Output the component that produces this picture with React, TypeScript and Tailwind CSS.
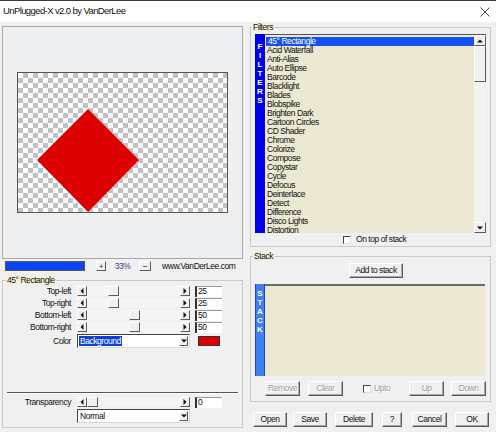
import React from 'react';

const filters = [
  '45° Rectangle',
  'Acid Waterfall',
  'Anti-Alias',
  'Auto Ellipse',
  'Barcode',
  'Blacklight',
  'Blades',
  'Blobspike',
  'Brighten Dark',
  'Cartoon Circles',
  'CD Shader',
  'Chrome',
  'Colorize',
  'Compose',
  'Copystar',
  'Cycle',
  'Defocus',
  'Deinterlace',
  'Detect',
  'Difference',
  'Disco Lights',
  'Distortion',
];

const raised =
  'border border-t-white border-l-white border-r-[#5a5a5a] border-b-[#5a5a5a] bg-[#f0f0f0]';

const Arrow = ({ dir }: { dir: 'left' | 'right' | 'up' | 'down' }) => {
  if (dir === 'left')
    return (
      <svg width="4" height="6" viewBox="0 0 4 6">
        <polygon points="3.5,0 3.5,6 0.5,3" fill="#111" />
      </svg>
    );
  if (dir === 'right')
    return (
      <svg width="4" height="6" viewBox="0 0 4 6">
        <polygon points="0.5,0 0.5,6 3.5,3" fill="#111" />
      </svg>
    );
  if (dir === 'up')
    return (
      <svg width="6" height="4" viewBox="0 0 6 4">
        <polygon points="0,3.5 6,3.5 3,0.5" fill="#111" />
      </svg>
    );
  return (
    <svg width="6" height="4" viewBox="0 0 6 4">
      <polygon points="0,0.5 6,0.5 3,3.5" fill="#111" />
    </svg>
  );
};

const HScroll = ({ value }: { value: number }) => (
  <div className="flex h-[10px] w-[113px] bg-[#f5f5f5]">
    <div className={`${raised} flex w-[10px] items-center justify-center`}>
      <Arrow dir="left" />
    </div>
    <div className="flex flex-1">
      <div style={{ width: Math.round(value * 0.84) }} />
      <div className={`${raised} w-[11px]`} />
    </div>
    <div className={`${raised} flex w-[10px] items-center justify-center`}>
      <Arrow dir="right" />
    </div>
  </div>
);

const Edit = ({ value }: { value: string }) => (
  <div className="ml-[5px] flex h-[11px] w-[27px] items-center border-t border-l-2 border-t-[#9a9a9a] border-l-[#333] bg-white pl-[1px] leading-none">
    {value}
  </div>
);

const SliderRow = ({ label, value }: { label: string; value: number }) => (
  <div className="flex h-[12px] items-center">
    <span className="w-[68px] text-right leading-none">{label}</span>
    <div className="ml-[6px]">
      <HScroll value={value} />
    </div>
    <Edit value={String(value)} />
  </div>
);

const Combo = ({ text, selected }: { text: string; selected?: boolean }) => (
  <div className="flex h-[14px] w-[113px] items-center border border-t-[#444] border-l-[#444] border-r-[#d8d8d8] border-b-[#d8d8d8] bg-white">
    <span
      className={
        selected ? 'ml-[1px] bg-[#0b3fd8] px-[1px] leading-[10px] text-white' : 'ml-[2px] leading-none'
      }
    >
      {text}
    </span>
    <div className={`${raised} mr-[1px] ml-auto flex h-[10px] w-[9px] items-center justify-center`}>
      <Arrow dir="down" />
    </div>
  </div>
);

const Check = () => (
  <div className="h-[8px] w-[8px] border border-t-[#444] border-l-[#444] border-r-[#ddd] border-b-[#ddd] bg-white" />
);

const SideBar = ({ text, className }: { text: string; className: string }) => (
  <div className={`flex w-[10px] flex-col items-center text-[8px] font-bold leading-[9px] tracking-normal text-white ${className}`}>
    {text.split('').map((c, i) => (
      <span key={i}>{c}</span>
    ))}
  </div>
);

const Btn = ({ label, w, disabled, className = '' }: { label: string; w: string; disabled?: boolean; className?: string }) => (
  <div
    className={`${raised} flex h-[15px] items-center justify-center shadow-[inset_-1px_-1px_0_#a8a8a8] ${w} ${
      disabled ? 'text-[#a0a0a0] [text-shadow:1px_1px_0_#fff]' : ''
    } ${className}`}
  >
    {label}
  </div>
);

export default function App() {
  return (
    <div className="flex h-[432px] w-[496px] flex-col overflow-hidden bg-[#f0f0f0] font-['Liberation_Sans',Arial,sans-serif] text-[8.5px] tracking-[-0.45px] text-[#111]">
      {/* title bar */}
      <div className="flex h-[22px] items-center border-t border-[#3a3a3a] bg-white pr-[6px] pl-[3px]">
        <span className="text-[9.5px] tracking-[-0.6px]">UnPlugged-X v2.0 by VanDerLee</span>
        <svg className="ml-auto" width="10" height="10" viewBox="0 0 10 10">
          <path d="M0.5 0.5 L9.5 9.5 M9.5 0.5 L0.5 9.5" stroke="#333" strokeWidth="0.9" />
        </svg>
      </div>

      <div className="flex flex-1">
        {/* left column */}
        <div className="flex w-[250px] flex-col">
          <div className="mt-[4px] ml-[2px] flex h-[233px] w-[241px] items-center justify-center border border-[#a9a9a9] bg-[#eeeff1]">
            <div className="h-[141px] w-[211px] border border-[#555] bg-[conic-gradient(#c2c2c2_25%,#fff_0_50%,#c2c2c2_0_75%,#fff_0)] bg-[length:10px_10px]">
              <svg width="209" height="139" viewBox="0 0 209 139">
                <polygon points="70,36 121,87 70,139 19,87" fill="#dc0000" />
              </svg>
            </div>
          </div>

          <div className="mt-[2px] flex h-[10px] items-center">
            <div className="ml-[5px] h-[10px] w-[80px] border border-[#555] bg-[#0c44f2]" />
            <div className={`${raised} ml-[11px] flex h-[10px] w-[10px] items-center justify-center text-[7px] leading-none`}>
              +
            </div>
            <span className="w-[33px] text-center text-[#3b3b8f]">33%</span>
            <div className={`${raised} flex h-[10px] w-[12px] items-center justify-center leading-none`}>
              −
            </div>
            <span className="ml-[11px]">www.VanDerLee.com</span>
          </div>

          <fieldset className="mt-[4px] ml-[2px] h-[153px] w-[241px] border border-[#c9c9c9]">
            <legend className="ml-[3px] bg-[#f5f0dc] px-[1px] leading-[10px]">45° Rectangle</legend>
            <div className="flex h-[142px] flex-col">
              <SliderRow label="Top-left" value={25} />
              <SliderRow label="Top-right" value={25} />
              <SliderRow label="Bottom-left" value={50} />
              <SliderRow label="Bottom-right" value={50} />
              <div className="mt-[1px] flex h-[14px] items-center">
                <span className="w-[68px] text-right leading-none">Color</span>
                <div className="ml-[6px]">
                  <Combo text="Background" selected />
                </div>
                <div className="ml-[8px] h-[10px] w-[22px] border border-[#333] bg-[#dc0000]" />
              </div>
              <div className="flex-1" />
              <div className="mx-[4px] h-px bg-[#555]" />
              <div className="mx-[4px] h-px bg-white" />
              <div className="mt-[2px]">
                <SliderRow label="Transparency" value={0} />
              </div>
              <div className="mt-[1px] mb-[4px] ml-[74px]">
                <Combo text="Normal" />
              </div>
            </div>
          </fieldset>
        </div>

        {/* right column */}
        <div className="flex w-[241px] flex-col">
          <fieldset className="h-[225px] border border-[#c9c9c9]">
            <legend className="ml-[1px] bg-[#f5f0dc] px-[1px] leading-[10px]">Filters</legend>
            <div className="flex h-[214px] flex-col">
              <div className="mt-[2px] ml-[4px] flex h-[199px]">
                <SideBar text="FILTERS" className="bg-[#0000f0] pt-[8px]" />
                <div className="flex w-[221px] overflow-hidden border-t border-[#555] bg-[#ece8d2]">
                  <div className="flex flex-1 flex-col pt-[2px]">
                    {filters.map((f, i) => (
                      <div
                        key={f}
                        className={`h-[9px] shrink-0 pl-[2px] leading-[9px] ${
                          i === 0 ? 'ml-[1px] bg-[#1550f0] text-white' : ''
                        }`}
                      >
                        {f}
                      </div>
                    ))}
                  </div>
                  <div className="flex w-[12px] flex-col bg-[#f3f3f3]">
                    <div className={`${raised} flex h-[11px] items-center justify-center`}>
                      <Arrow dir="up" />
                    </div>
                    <div className={`${raised} h-[36px]`} />
                    <div className="flex-1" />
                    <div className={`${raised} flex h-[11px] items-center justify-center`}>
                      <Arrow dir="down" />
                    </div>
                  </div>
                </div>
              </div>
              <div className="flex h-[13px] items-center pl-[92px]">
                <Check />
                <span className="ml-[5px] leading-none">On top of stack</span>
              </div>
            </div>
          </fieldset>

          <fieldset className="mt-[4px] h-[151px] border border-[#c9c9c9]">
            <legend className="ml-[2px] bg-[#f5f0dc] px-[1px] leading-[10px]">Stack</legend>
            <div className="flex h-[140px] flex-col">
              <Btn label="Add to stack" w="w-[54px]" className="mt-[2px] ml-[98px] h-[13px]" />
              <div className="mt-[6px] ml-[4px] flex h-[92px]">
                <SideBar
                  text="STACK"
                  className="border-x border-[#1b45c8] bg-[#3e7ff2] pt-[5px]"
                />
                <div className="w-[220px] border-t-2 border-[#6b6b6b] bg-[#ece8d2]" />
              </div>
              <div className="mt-[5px] flex h-[15px] items-center">
                <Btn label="Remove" w="w-[35px]" disabled className="ml-[14px]" />
                <Btn label="Clear" w="w-[35px]" disabled className="ml-[8px]" />
                <div className="ml-[20px]">
                  <Check />
                </div>
                <span className="ml-[3px] text-[#a0a0a0] [text-shadow:1px_1px_0_#fff]">Upto</span>
                <Btn label="Up" w="w-[35px]" disabled className="ml-[19px]" />
                <Btn label="Down" w="w-[35px]" disabled className="ml-[7px]" />
              </div>
            </div>
          </fieldset>

          <div className="mt-[10px] flex items-center">
            <Btn label="Open" w="w-[34px]" className="ml-[3px]" />
            <Btn label="Save" w="w-[34px]" className="ml-[6px]" />
            <Btn label="Delete" w="w-[38px]" className="ml-[8px]" />
            <Btn label="?" w="w-[20px]" className="ml-[9px]" />
            <Btn label="Cancel" w="w-[35px]" className="ml-[10px]" />
            <Btn label="OK" w="w-[34px]" className="ml-[8px]" />
          </div>
        </div>
      </div>
    </div>
  );
}
